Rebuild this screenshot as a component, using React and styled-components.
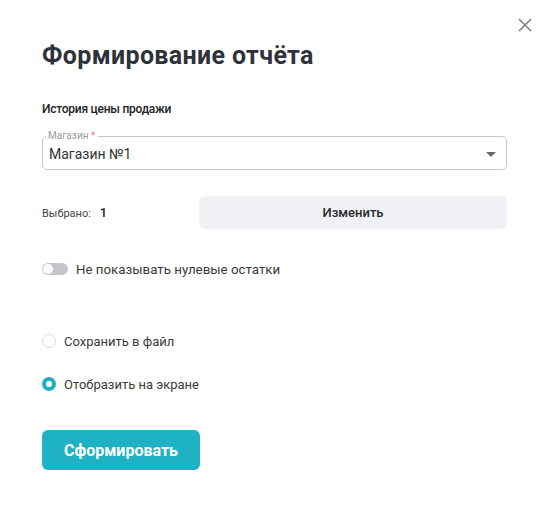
import React from "react";
import styled, { createGlobalStyle } from "styled-components";

const Global = createGlobalStyle`
  html, body { margin: 0; padding: 0; background: #ffffff; }
  body { font-family: Roboto, "Liberation Sans", Arial, sans-serif; color: #333333; }
  * { box-sizing: border-box; }
`;

const Modal = styled.div`
  position: relative;
  width: 548px;
  height: 518px;
  padding: 42px 41px 0 42px;
  display: flex;
  flex-direction: column;
  background: #fff;
`;

const Close = styled.button`
  position: absolute;
  top: 16px;
  right: 14px;
  width: 18px;
  height: 18px;
  padding: 0;
  border: 0;
  background: transparent;
  display: flex;
  align-items: center;
  justify-content: center;
  cursor: pointer;
`;

const Title = styled.h1`
  margin: 0;
  font-size: 25px;
  line-height: 28px;
  font-weight: 700;
  color: #2f323a;
  letter-spacing: 0.35px;
`;

const Subtitle = styled.div`
  margin-top: 31px;
  font-size: 12px;
  line-height: 16px;
  font-weight: 500;
  letter-spacing: -0.25px;
  color: #222;
`;

const SelectBox = styled.div`
  position: relative;
  margin-top: 19px;
  height: 34px;
  border: 1px solid #c6c7ca;
  border-radius: 5px;
  padding: 9px 10px 0 6px;
  display: flex;
  align-items: flex-start;
  justify-content: space-between;
`;

const FloatLabel = styled.span`
  position: absolute;
  top: -7px;
  left: 3px;
  padding: 0 3px 0 2px;
  background: #fff;
  font-size: 10px;
  line-height: 12px;
  color: #9b9ca0;
`;

const Required = styled.span`
  color: #f08080;
`;

const SelectValue = styled.span`
  font-size: 14px;
  line-height: 16px;
  color: #333;
`;

const Caret = styled.span`
  margin-top: 6px;
  width: 0;
  height: 0;
  border-left: 5px solid transparent;
  border-right: 5px solid transparent;
  border-top: 5px solid #666a70;
`;

const ChosenRow = styled.div`
  margin-top: 26px;
  display: grid;
  grid-template-columns: 157px 1fr;
  align-items: center;
`;

const Chosen = styled.div`
  display: flex;
  align-items: baseline;
  gap: 9px;
`;

const ChosenLabel = styled.span`
  font-size: 11px;
  color: #444;
`;

const ChosenCount = styled.span`
  font-size: 13px;
  font-weight: 500;
  color: #222;
`;

const GrayButton = styled.button`
  height: 33px;
  border: 0;
  border-radius: 6px;
  background: #f0f1f5;
  font-family: inherit;
  font-size: 13px;
  font-weight: 500;
  color: #2a2a2a;
  cursor: pointer;
`;

const OptionRow = styled.label`
  display: flex;
  align-items: center;
  height: 20px;
  gap: ${(p) => p.$gap || 8}px;
  margin-top: ${(p) => p.$mt}px;
  font-size: ${(p) => p.$size || 13}px;
  color: #3a3a3a;
  cursor: pointer;
`;

const Track = styled.span`
  width: 26px;
  height: 12px;
  border-radius: 6px;
  background: #c3c5c9;
  padding: 1px;
  display: flex;
  align-items: center;
`;

const Thumb = styled.span`
  width: 10px;
  height: 10px;
  border-radius: 50%;
  background: #fff;
`;

const Radio = styled.span`
  width: 14px;
  height: 14px;
  border-radius: 50%;
  border: ${(p) => (p.$checked ? "4px solid #1fb0c4" : "1px solid #d8d9dd")};
  background: #fff;
`;

const Submit = styled.button`
  margin-top: 36px;
  align-self: flex-start;
  width: 158px;
  height: 40px;
  border: 0;
  border-radius: 6px;
  background: #1fb1c4;
  color: #fff;
  font-family: inherit;
  font-size: 16px;
  font-weight: 700;
  cursor: pointer;
`;

export default function App() {
  return (
    <>
      <Global />
      <Modal>
        <Close aria-label="Закрыть">
          <svg width="14" height="14" viewBox="0 0 14 14">
            <path d="M1 1 L13 13 M13 1 L1 13" stroke="#7d818a" strokeWidth="1.6" fill="none" />
          </svg>
        </Close>
        <Title>Формирование отчёта</Title>
        <Subtitle>История цены продажи</Subtitle>
        <SelectBox>
          <FloatLabel>
            Магазин <Required>*</Required>
          </FloatLabel>
          <SelectValue>Магазин №1</SelectValue>
          <Caret />
        </SelectBox>
        <ChosenRow>
          <Chosen>
            <ChosenLabel>Выбрано:</ChosenLabel>
            <ChosenCount>1</ChosenCount>
          </Chosen>
          <GrayButton>Изменить</GrayButton>
        </ChosenRow>
        <OptionRow $mt={30} $size={13.3}>
          <Track>
            <Thumb />
          </Track>
          Не показывать нулевые остатки
        </OptionRow>
        <OptionRow $mt={52} $gap={8}>
          <Radio />
          Сохранить в файл
        </OptionRow>
        <OptionRow $mt={23} $gap={8}>
          <Radio $checked />
          Отобразить на экране
        </OptionRow>
        <Submit>Сформировать</Submit>
      </Modal>
    </>
  );
}
